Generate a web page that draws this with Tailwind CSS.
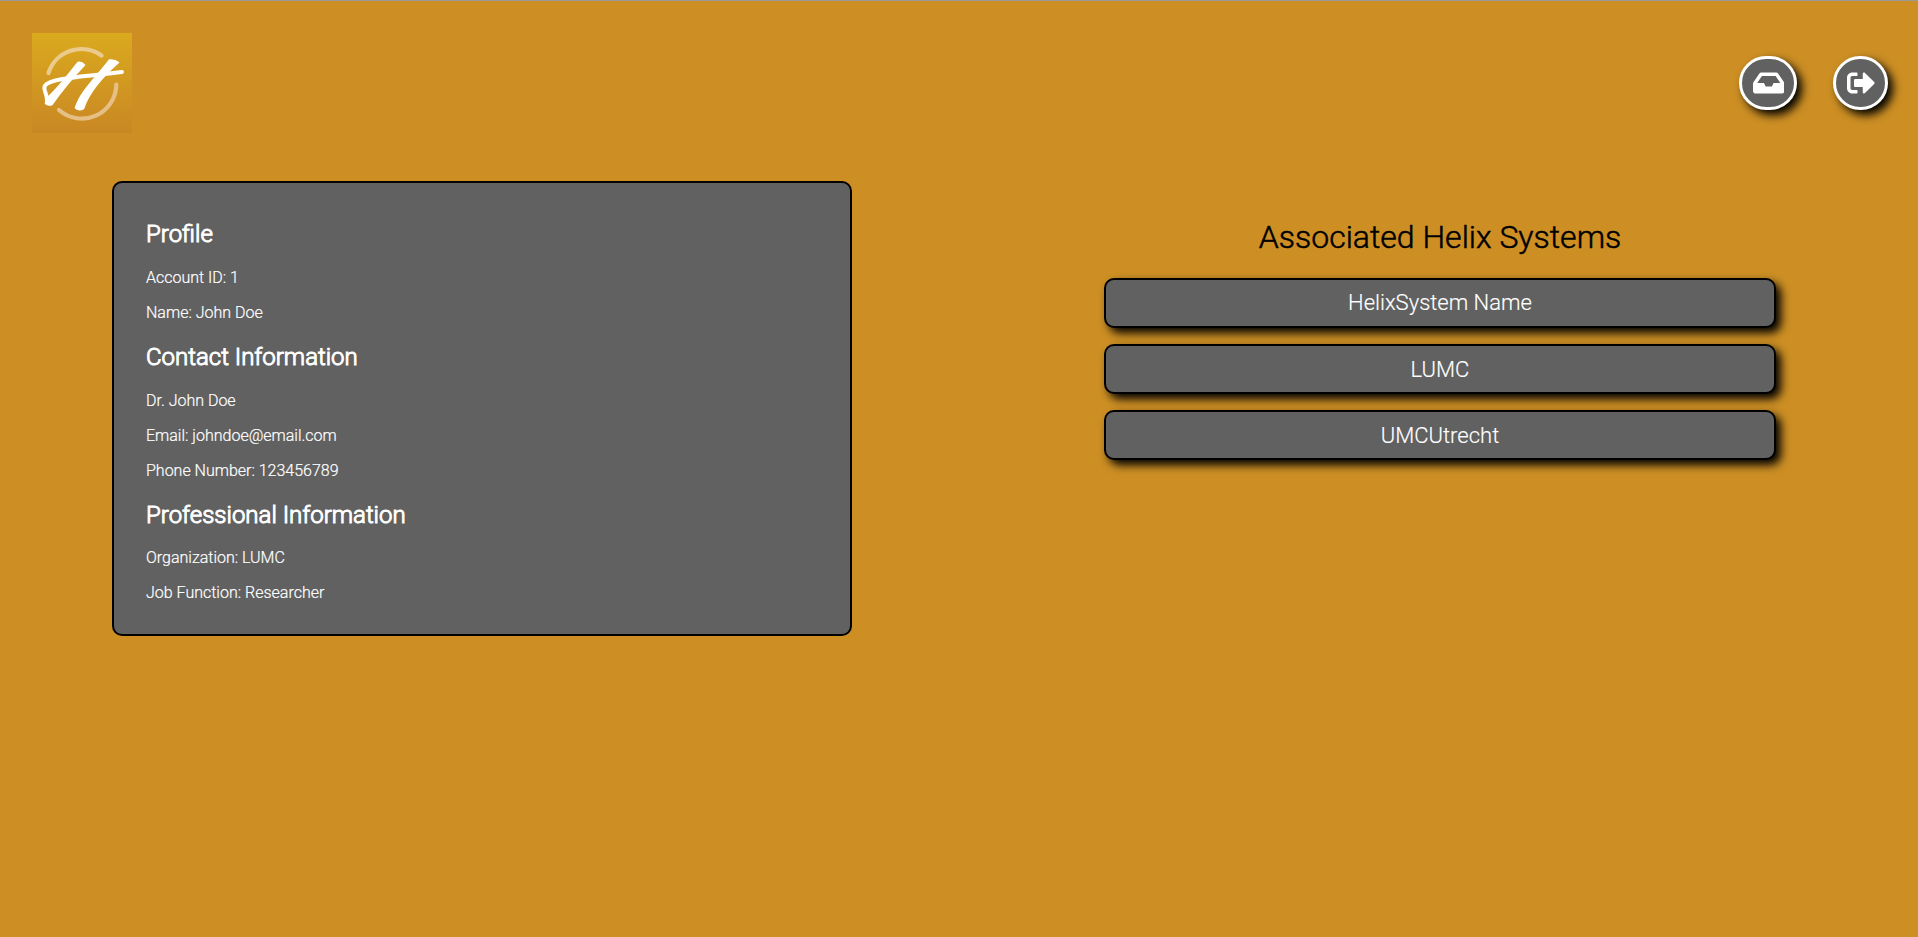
<!DOCTYPE html>
<html lang="en">
<head>
<meta charset="utf-8">
<title>Helix Profile</title>
<script src="https://cdn.jsdelivr.net/npm/@tailwindcss/browser@4"></script>
</head>
<body class="h-[937px] overflow-hidden border-t border-[#999999] bg-[#cd8f24] font-[Roboto,sans-serif] font-light">
<header class="flex items-center justify-between pt-8 pl-8 pr-[30px]">
  <svg class="size-[100px]" viewBox="0 0 100 100" fill="none" stroke-linecap="round" stroke-linejoin="round">
    <defs><linearGradient id="g" x1="0" y1="0" x2="0" y2="1"><stop offset="0" stop-color="#daaa1e"/><stop offset="1" stop-color="#c98724"/></linearGradient></defs>
    <rect width="100" height="100" fill="url(#g)"/>
    <path d="M16.500 40A34.500 34.500 0 0 1 69.500 22.500" stroke="#ebcb8c" stroke-width="4.200"/>
    <path d="M84.300 51.500A34.500 34.500 0 0 1 27 77" stroke="#e5bf86" stroke-width="4.200"/>
    <path d="M46 29.500Q49.500 28.500 52.500 32C43 42 31 56 20 71.500Q16 73 13.500 70.500L15 65C25 57 36 42 46 29.500Z" fill="#fff" stroke="#fff" stroke-width="1.600"/>
    <path d="M77.500 27Q83 26.500 86.500 29.500C69 45 57 59 51.500 75.500Q47 78 43.500 75C48 59 63 46 77.500 27Z" fill="#fff" stroke="#fff" stroke-width="1.600"/>
    <path d="M15 68C15.500 60 10.500 57 13 52.500C18 45 52 43.500 90 39" stroke="#fff" stroke-width="4"/>
  </svg>
  <nav class="flex gap-9">
    <button class="flex h-[54px] w-[58px] items-center justify-center rounded-full border-3 border-white bg-[#616161] shadow-[5px_5px_10px_black]" aria-label="Inbox">
      <svg class="ml-px h-7 w-[31.5px]" viewBox="0 0 576 512" fill="#fff"><path d="M567.938 243.908L462.250 85.374A48.003 48.003 0 0 0 422.311 64H153.689a48 48 0 0 0-39.938 21.374L8.062 243.908A47.994 47.994 0 0 0 0 270.533V400c0 26.510 21.490 48 48 48h480c26.510 0 48-21.490 48-48V270.533a47.994 47.994 0 0 0-8.062-26.625zM162.252 128h251.497l85.333 128H376l-32 64H232l-32-64H76.918l85.334-128z"/></svg>
    </button>
    <button class="flex h-[54px] w-[55px] items-center justify-center rounded-full border-3 border-white bg-[#616161] shadow-[5px_5px_10px_black]" aria-label="Sign out">
      <svg class="size-7" viewBox="0 0 512 512" fill="#fff"><path d="M497 273L329 441c-15 15-41 4.500-41-17v-96H152c-13.300 0-24-10.700-24-24v-96c0-13.300 10.700-24 24-24h136V88c0-21.400 25.900-32 41-17l168 168c9.300 9.400 9.300 24.600 0 34zM192 436v-40c0-6.600-5.400-12-12-12H96c-17.700 0-32-14.300-32-32V160c0-17.700 14.300-32 32-32h84c6.600 0 12-5.400 12-12V76c0-6.600-5.400-12-12-12H96c-53 0-96 43-96 96v192c0 53 43 96 96 96h84c6.600 0 12-5.400 12-12z"/></svg>
    </button>
  </nav>
</header>
<main class="mt-12 flex items-start justify-between pl-28 pr-[142px]">
  <section class="h-[455px] w-[740px] rounded-[10px] border-2 border-black bg-[#616161] px-8 pt-[37px] text-base/[19px] text-white [-webkit-text-stroke:0.2px_white]">
    <h2 class="text-2xl/[28px] [-webkit-text-stroke:1px_white]">Profile</h2>
    <p class="mt-5">Account ID: 1</p>
    <p class="mt-4">Name: John Doe</p>
    <h2 class="mt-[21px] text-2xl/[28px] [-webkit-text-stroke:1px_white]">Contact Information</h2>
    <p class="mt-5">Dr. John Doe</p>
    <p class="mt-4">Email: johndoe@email.com</p>
    <p class="mt-4">Phone Number: 123456789</p>
    <h2 class="mt-[21px] text-2xl/[28px] [-webkit-text-stroke:1px_white]">Professional Information</h2>
    <p class="mt-[19px]">Organization: LUMC</p>
    <p class="mt-4">Job Function: Researcher</p>
  </section>
  <section class="flex w-[672px] flex-col gap-4 pt-[37px] text-center">
    <h1 class="mb-1.5 text-[32px]/[38px] [-webkit-text-stroke:0.5px_black]">Associated Helix Systems</h1>
    <button class="h-[50px] rounded-[10px] border-2 border-black bg-[#616161] pb-0.5 text-[22px] text-white shadow-[5px_5px_10px_black] [-webkit-text-stroke:0.15px_white]">HelixSystem Name</button>
    <button class="h-[50px] rounded-[10px] border-2 border-black bg-[#616161] text-[22px] text-white shadow-[5px_5px_10px_black] [-webkit-text-stroke:0.15px_white]">LUMC</button>
    <button class="h-[50px] rounded-[10px] border-2 border-black bg-[#616161] text-[22px] text-white shadow-[5px_5px_10px_black] [-webkit-text-stroke:0.15px_white]">UMCUtrecht</button>
  </section>
</main>
</body>
</html>
